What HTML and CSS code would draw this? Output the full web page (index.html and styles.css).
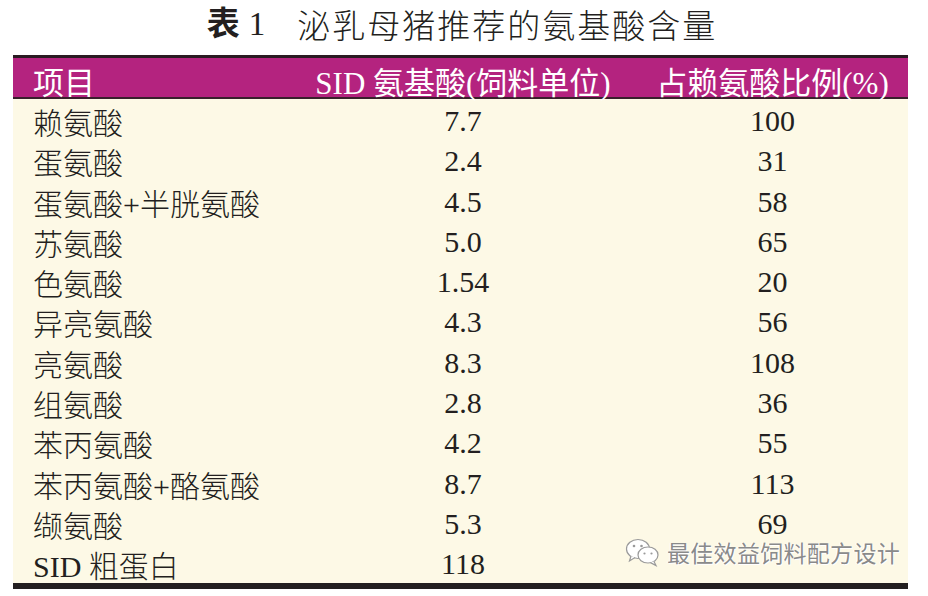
FILE: index.html
```html
<!DOCTYPE html>
<html lang="zh">
<head>
<meta charset="utf-8">
<link rel="stylesheet" href="styles.css">
</head>
<body>
<div class="page">
  <h1 class="title"><span class="tnum">表<span class="tdigit">1</span></span><span class="tname">泌乳母猪推荐的氨基酸含量</span></h1>
  <div class="table">
    <div class="row head">
      <div class="c1">项目</div><div class="c2">SID 氨基酸(饲料单位)</div><div class="c3">占赖氨酸比例(%)</div>
    </div>
    <div class="body">
      <div class="row"><div class="c1">赖氨酸</div><div class="c2">7.7</div><div class="c3">100</div></div>
      <div class="row"><div class="c1">蛋氨酸</div><div class="c2">2.4</div><div class="c3">31</div></div>
      <div class="row"><div class="c1">蛋氨酸+半胱氨酸</div><div class="c2">4.5</div><div class="c3">58</div></div>
      <div class="row"><div class="c1">苏氨酸</div><div class="c2">5.0</div><div class="c3">65</div></div>
      <div class="row"><div class="c1">色氨酸</div><div class="c2">1.54</div><div class="c3">20</div></div>
      <div class="row"><div class="c1">异亮氨酸</div><div class="c2">4.3</div><div class="c3">56</div></div>
      <div class="row"><div class="c1">亮氨酸</div><div class="c2">8.3</div><div class="c3">108</div></div>
      <div class="row"><div class="c1">组氨酸</div><div class="c2">2.8</div><div class="c3">36</div></div>
      <div class="row"><div class="c1">苯丙氨酸</div><div class="c2">4.2</div><div class="c3">55</div></div>
      <div class="row"><div class="c1">苯丙氨酸+酪氨酸</div><div class="c2">8.7</div><div class="c3">113</div></div>
      <div class="row"><div class="c1">缬氨酸</div><div class="c2">5.3</div><div class="c3">69</div></div>
      <div class="row"><div class="c1">SID 粗蛋白</div><div class="c2">118</div><div class="c3"></div></div>
    </div>
    <div class="watermark">
      <svg class="wx" width="36" height="30" viewBox="0 0 36 30">
        <ellipse cx="13" cy="12" rx="11.5" ry="9.5" fill="#fff" stroke="#9a9a9a" stroke-width="1.2"/>
        <path d="M6 19 L4.5 24 L10 20.5" fill="#fff" stroke="#9a9a9a" stroke-width="1.2"/>
        <ellipse cx="23" cy="18" rx="10" ry="8" fill="#fff" stroke="#9a9a9a" stroke-width="1.2"/>
        <path d="M29 24.5 L31 28.5 L25.5 25.6" fill="#fff" stroke="#9a9a9a" stroke-width="1.2"/>
        <circle cx="9" cy="9" r="1.3" fill="#9a9a9a"/>
        <circle cx="16.5" cy="9" r="1.3" fill="#9a9a9a"/>
        <circle cx="19.5" cy="16.5" r="1.1" fill="#9a9a9a"/>
        <circle cx="26.5" cy="16.5" r="1.1" fill="#9a9a9a"/>
      </svg>
      <span class="wtext">最佳效益饲料配方设计</span>
    </div>
  </div>
</div>
</body>
</html>
```
FILE: styles.css
```css
html, body {
  margin: 0;
  padding: 0;
  background: #ffffff;
}
.page {
  width: 928px;
  height: 596px;
  font-family: "Liberation Serif", "Noto Sans CJK SC", serif;
  color: #231f20;
}
.title {
  margin: 0 0 8px 0;
  height: 47px;
  display: flex;
  justify-content: center;
  align-items: center;
  font-weight: normal;
  font-size: 33px;
  line-height: 40px;
  padding-right: 4px;
}
.tnum {
  font-weight: bold;
  margin-right: 32px;
}
.tdigit {
  font-weight: normal;
  margin-left: 9px;
}
.tname {
  letter-spacing: 2px;
  font-family: "Noto Sans CJK SC", serif;
  font-weight: 300;
}
.table {
  position: relative;
  margin-left: 13px;
  width: 895px;
  background: #fdf9e6;
  border-top: 3px solid #2a1a22;
  border-bottom: 6px solid #231f20;
}
.row {
  display: grid;
  grid-template-columns: 300px 300px 1fr;
  height: 40.3px;
  box-sizing: border-box;
  padding-bottom: 4px;
  align-items: center;
  font-size: 30px;
}
.row.head {
  background: #b4237f;
  color: #ffffff;
  height: 41px;
  padding-bottom: 2px;
  font-size: 31px;
  border-bottom: 2px solid #3a1f2c;
}
.c1 {
  padding-left: 20px;
}
.c2 {
  text-align: center;
}
.c3 {
  text-align: center;
  padding-left: 24px;
}
.body .c1 {
  font-weight: 300;
}
.watermark {
  position: absolute;
  left: 612px;
  top: 477px;
  display: flex;
  align-items: center;
  gap: 6px;
}
.wtext {
  font-family: "Noto Sans CJK SC", sans-serif;
  font-size: 23px;
  color: #8a8a8a;
  text-shadow: 1px 1px 0 #ffffff, -1px 0 0 #ffffff;
  letter-spacing: 0.3px;
}
```
